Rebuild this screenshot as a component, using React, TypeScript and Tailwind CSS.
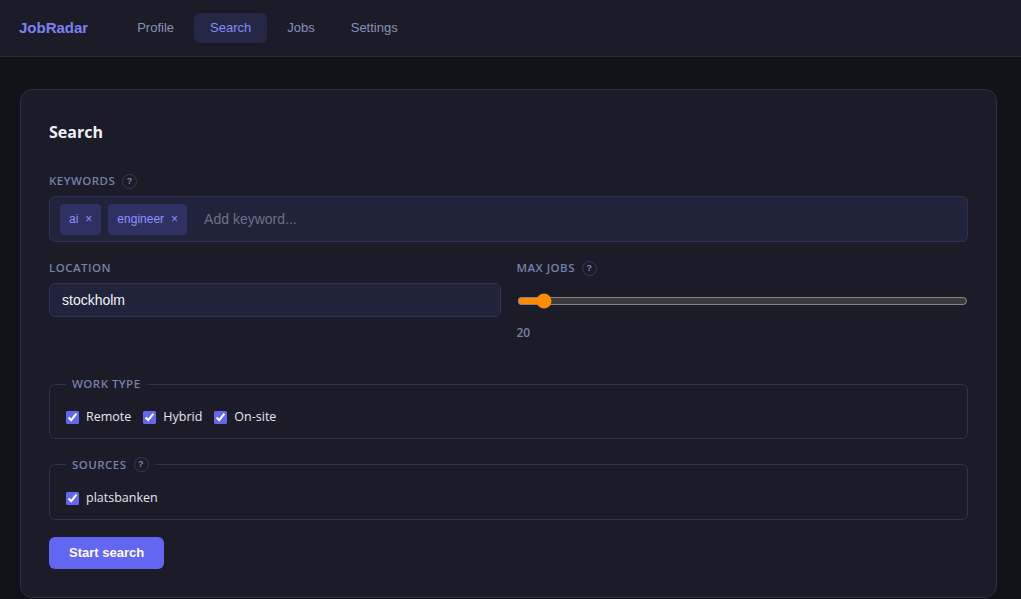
import { useState } from "react";

const sans = "font-['Open_Sans',sans-serif]";
const arial = "font-['Liberation_Sans',Arial,sans-serif]";

function Help() {
  return (
    <span
      className={`ml-[7px] inline-flex h-[15px] w-[15px] items-center justify-center rounded-full border border-[#363a5a] text-[9px] font-bold leading-none text-[#7d86ad] ${arial}`}
    >
      ?
    </span>
  );
}

function Label({ text, help }: { text: string; help?: boolean }) {
  return (
    <div
      className={`flex h-5 items-center text-[11.5px] font-semibold uppercase tracking-[0.04em] text-[#7680a8] ${sans}`}
    >
      {text}
      {help && <Help />}
    </div>
  );
}

function Check({ label }: { label: string }) {
  return (
    <label className={`flex items-center gap-[7px] text-[12.5px] text-[#e4e6f2] ${sans}`}>
      <input type="checkbox" defaultChecked className="m-0 h-[13px] w-[13px] accent-[#6366f1]" />
      {label}
    </label>
  );
}

export default function App() {
  const [max, setMax] = useState(20);
  const tabs = ["Profile", "Search", "Jobs", "Settings"];

  return (
    <div className="min-h-[599px] bg-[#111218] [color-scheme:dark]">
      <nav className="flex h-[57px] items-center border-b border-[#2a2d48] bg-[#1b1c27] pl-[19px]">
        <span className={`mr-[33px] text-[15px] font-bold text-[#7c80f2] ${arial}`}>JobRadar</span>
        <div className="flex gap-[4px]">
          {tabs.map((t) => (
            <button
              key={t}
              type="button"
              className={`h-[30px] rounded-md px-4 text-[13px] ${arial} ${
                t === "Search" ? "bg-[#252844] text-[#818cf8]" : "text-[#8890b8]"
              }`}
            >
              {t}
            </button>
          ))}
        </div>
      </nav>

      <main className="pl-[20px] pr-[24px] pt-8">
        <section className="rounded-xl border border-[#2b2e4a] bg-[#1b1c27] px-7 pb-7 pt-[28px]">
          <h2 className={`h-7 text-[16px] font-bold leading-7 text-[#eef0f8] ${sans}`}>Search</h2>

          <div className="mt-[25px]">
            <Label text="Keywords" help />
            <div className="mt-[5px] flex h-[46px] items-center gap-[7px] rounded-md border border-[#2e3252] bg-[#20233a] px-[10px]">
              {["ai", "engineer"].map((k) => (
                <span
                  key={k}
                  className={`flex h-[31px] items-center gap-[7px] rounded-[4px] bg-[#2f3163] px-[9px] text-[12px] text-[#8e92ff] ${arial}`}
                >
                  {k}
                  <span className="text-[12px]">×</span>
                </span>
              ))}
              <input
                placeholder="Add keyword..."
                className={`ml-[10px] flex-1 bg-transparent text-[14px] text-[#e4e6f2] outline-none placeholder:text-[#6c7188] ${arial}`}
              />
            </div>
          </div>

          <div className="mt-4 grid grid-cols-2 gap-4">
            <div>
              <Label text="Location" />
              <input
                defaultValue="stockholm"
                className={`mt-[5px] h-[34px] w-full rounded-md border border-[#2e3252] bg-[#20233a] px-3 text-[14px] text-[#f1f2f8] outline-none ${arial}`}
              />
            </div>
            <div>
              <Label text="Max jobs" help />
              <input
                type="range"
                min={10}
                max={230}
                value={max}
                onChange={(e) => setMax(Number(e.target.value))}
                className="mt-[15px] block w-full accent-[#ff8c00]"
              />
              <div className={`mt-[15px] text-[12px] font-semibold text-[#7680a8] ${sans}`}>{max}</div>
            </div>
          </div>

          <fieldset className="mt-8 rounded-md border border-[#2e3150] px-4 pb-[11px] pt-[14px]">
            <legend className="px-[6px]">
              <Label text="Work type" />
            </legend>
            <div className="flex gap-[12px]">
              <Check label="Remote" />
              <Check label="Hybrid" />
              <Check label="On-site" />
            </div>
          </fieldset>

          <fieldset className="mt-[16px] rounded-md border border-[#2e3150] px-4 pb-[11px] pt-[14px]">
            <legend className="px-[6px]">
              <Label text="Sources" help />
            </legend>
            <div className="flex gap-3">
              <Check label="platsbanken" />
            </div>
          </fieldset>

          <button
            type="button"
            className={`mt-[17px] h-[32px] rounded-md bg-[#6366f1] px-5 text-[13px] font-bold text-white ${arial}`}
          >
            Start search
          </button>
        </section>
      </main>
    </div>
  );
}
